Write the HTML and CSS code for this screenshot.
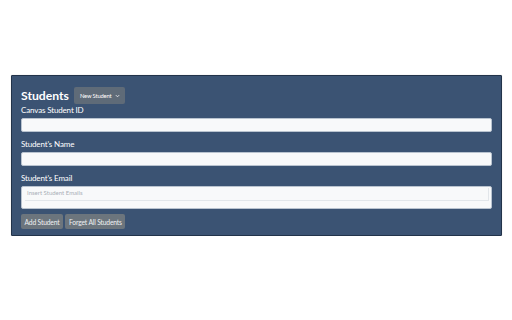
FILE: index.html
```html
<!DOCTYPE html>
<html>
<head>
<meta charset="utf-8">
<link rel="stylesheet" href="styles.css">
</head>
<body>
<div class="page">
  <div class="panel">
    <div class="header">
      <h1 class="title">Students</h1>
      <button class="select-btn">New Student <svg class="caret" width="5" height="4" viewBox="0 0 5 4"><path d="M0.8 1.1 L2.5 2.8 L4.2 1.1" fill="none" stroke="#e6e9ec" stroke-width="0.9"/></svg></button>
    </div>
    <div class="group">
      <label class="label">Canvas Student ID</label>
      <div class="input"></div>
    </div>
    <div class="group">
      <label class="label">Student's Name</label>
      <div class="input"></div>
    </div>
    <div class="group">
      <label class="label">Student's Email</label>
      <div class="tags"><div class="tags-inner">Insert Student Emails</div></div>
    </div>
    <div class="actions">
      <button class="btn">Add Student</button>
      <button class="btn">Forget All Students</button>
    </div>
  </div>
</div>
</body>
</html>
```
FILE: styles.css
```css
html, body {
  margin: 0;
  padding: 0;
  background: #ffffff;
}
body {
  font-family: Lato, "Open Sans", sans-serif;
}
.page {
  padding: 75px 10px 0 11px;
}
.panel {
  background: #3b5373;
  border: 1px solid #22334a;
  border-radius: 1px;
  padding: 11px 9px 6px 9px;
  box-shadow: 0 0 1px rgba(0,0,0,0.3);
}
.header {
  display: flex;
  align-items: center;
  gap: 5px;
  height: 17px;
  margin-bottom: 1px;
}
.title {
  margin: 0;
  font-size: 12.2px;
  font-weight: 700;
  color: #ffffff;
  line-height: 17px;
}
.select-btn {
  display: flex;
  align-items: center;
  gap: 4px;
  height: 17px;
  padding: 0 5px 0 6px;
  border: none;
  border-radius: 2px;
  background: #5f6b78;
  color: #ffffff;
  font-family: inherit;
  font-size: 5.8px;
  white-space: nowrap;
  letter-spacing: -0.15px;
}
.caret {
  display: block;
}
.group {
  margin-bottom: 7px;
}
.label {
  display: block;
  font-size: 8px;
  line-height: 11px;
  color: #ffffff;
  margin-bottom: 2px;
  letter-spacing: -0.15px;
}
.input {
  height: 12px;
  background: #f8f9fa;
  border: 1px solid #b9c3cf;
  border-radius: 2px;
}
.tags {
  height: 20px;
  background: #f8f9fa;
  border: 1px solid #b9c3cf;
  border-radius: 2px;
  padding: 1px 2px 0 3px;
  box-sizing: content-box;
}
.tags-inner {
  height: 12px;
  border-bottom: 1px solid #e2e6ea;
  border-right: 1px solid #e2e6ea;
  font-size: 6px;
  line-height: 10px;
  color: #a8afb7;
  padding-left: 2px;
}
.actions {
  display: flex;
  gap: 2.5px;
  margin-top: -2px;
}
.btn {
  height: 15px;
  padding: 0 3.5px;
  border: none;
  border-radius: 2px;
  background: #6c757d;
  color: #eef0f2;
  font-family: inherit;
  font-size: 6.7px;
  white-space: nowrap;
  letter-spacing: -0.15px;
}
```
